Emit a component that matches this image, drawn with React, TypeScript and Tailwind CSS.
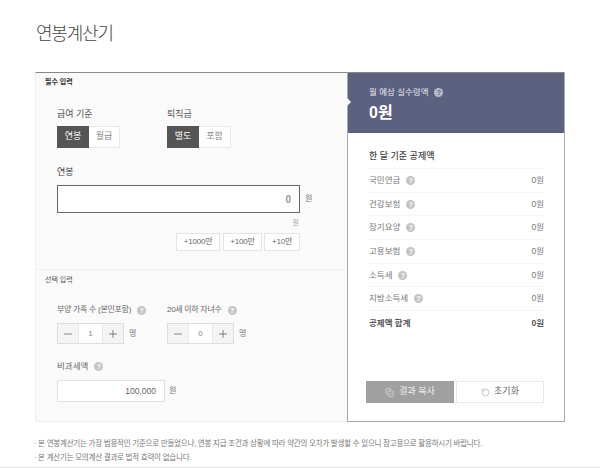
import { CopyCheck, Minus, Plus, RotateCcw } from "lucide-react";

const FONT = "font-['Liberation_Sans','Noto_Sans_CJK_KR',sans-serif]";

function Help({ dark }: { dark?: boolean }) {
  return (
    <span
      className={`ml-[6px] inline-flex h-[9px] w-[9px] shrink-0 items-center justify-center rounded-full text-[7px] font-bold leading-none ${
        dark ? "bg-[#b9bbc8] text-[#5d6180]" : "bg-[#c4c4c4] text-white"
      }`}
    >
      ?
    </span>
  );
}

function Toggle({ on, off, offWidth }: { on: string; off: string; offWidth: string }) {
  return (
    <div className="mt-[6px] flex h-[22px] w-fit text-[9px]">
      <div className="flex w-[32px] items-center justify-center bg-[#555555] text-white">{on}</div>
      <div className={`flex ${offWidth} items-center justify-center border border-l-0 border-[#e8e8e8] bg-white text-[#888888]`}>
        {off}
      </div>
    </div>
  );
}

function Stepper({ value }: { value: number }) {
  return (
    <div className="mt-[7px] flex items-center">
      <div className="flex h-[21px] border border-[#dddddd] bg-[#f4f4f4] text-[#555555]">
        <div className="flex w-[21px] items-center justify-center border-r border-[#e8e8e8]">
          <Minus size={12} strokeWidth={1.4} />
        </div>
        <div className="flex w-[23px] items-center justify-center bg-white text-[8px] text-[#888888]">{value}</div>
        <div className="flex w-[21px] items-center justify-center border-l border-[#e8e8e8]">
          <Plus size={12} strokeWidth={1.4} />
        </div>
      </div>
      <span className="ml-[5px] text-[8px] text-[#777777]">명</span>
    </div>
  );
}

const rows = ["국민연금", "건강보험", "장기요양", "고용보험", "소득세", "지방소득세"];

export default function App() {
  return (
    <div className={`${FONT} flex h-[468px] w-[600px] flex-col overflow-hidden bg-white text-[#666666]`}>
      <div className="px-[35px]">
        <h1 className="flex h-[72px] items-start pl-px pt-[21px] text-[18px] font-light leading-[26px] tracking-[-1.2px] text-[#444444]">
          연봉계산기
        </h1>

        <div className="flex h-[350px] w-[530px]">
          {/* Input side */}
          <div className="w-[312px] border-l border-t border-b border-l-[#eeeeee] border-t-[#888888] border-b-[#eeeeee] bg-[#fafafa]">
            <div className="h-[197px] border-b border-[#f0f0f0] pl-[9px] pt-[4px]">
              <div className="text-[7px] font-bold leading-[10px] text-[#333333]">필수 입력</div>
              <div className="ml-[12px] mt-[21px] flex">
                <div className="w-[110px]">
                  <div className="text-[9px] leading-[12px] text-[#555555]">급여 기준</div>
                  <Toggle on="연봉" off="월급" offWidth="w-[31px]" />
                </div>
                <div>
                  <div className="text-[9px] leading-[12px] text-[#555555]">퇴직금</div>
                  <Toggle on="별도" off="포함" offWidth="w-[32px]" />
                </div>
              </div>
              <div className="ml-[12px] mt-[18px] text-[9px] leading-[12px] text-[#444444]">연봉</div>
              <div className="ml-[12px] mt-[7px] flex items-center">
                <div className="flex h-[28px] w-[243px] items-center justify-end border border-[#666666] bg-white pr-[8px] text-[10px] font-bold text-[#999999]">
                  0
                </div>
                <span className="ml-[5px] text-[8px] text-[#777777]">원</span>
              </div>
              <div className="ml-[12px] mt-[5px] w-[243px] pr-px text-right text-[7px] leading-[9px] text-[#aaaaaa]">
                원
              </div>
              <div className="ml-[12px] mt-[6px] flex w-[243px] justify-end text-[8px] tracking-[-0.2px] text-[#666666]">
                <div className="flex h-[18px] w-[44px] items-center justify-center border border-[#e4e4e4] bg-white">+1000만</div>
                <div className="ml-[3px] flex h-[18px] w-[39px] items-center justify-center border border-[#e4e4e4] bg-white">+100만</div>
                <div className="ml-[2px] flex h-[18px] w-[36px] items-center justify-center border border-[#e4e4e4] bg-white">+10만</div>
              </div>
            </div>

            <div className="pl-[9px] pt-[5px]">
              <div className="text-[7px] leading-[10px] text-[#555555]">선택 입력</div>
              <div className="ml-[12px] mt-[19px] flex">
                <div className="w-[110px]">
                  <div className="flex h-[12px] items-center text-[8px] tracking-[-0.3px] text-[#666666]">
                    부양 가족 수 (본인포함)
                    <Help />
                  </div>
                  <Stepper value={1} />
                </div>
                <div>
                  <div className="flex h-[12px] items-center text-[8px] tracking-[-0.3px] text-[#666666]">
                    20세 이하 자녀수
                    <Help />
                  </div>
                  <Stepper value={0} />
                </div>
              </div>
              <div className="ml-[12px] mt-[16px] flex h-[12px] items-center text-[8.5px] text-[#666666]">
                비과세액
                <Help />
              </div>
              <div className="ml-[12px] mt-[8px] flex items-center">
                <div className="flex h-[22px] w-[108px] items-center justify-end border border-[#e0e0e0] bg-white pr-[8px] text-[8.5px] text-[#666666]">
                  100,000
                </div>
                <span className="ml-[4px] text-[8px] text-[#777777]">원</span>
              </div>
            </div>
          </div>

          {/* Result side */}
          <div className="relative flex w-[218px] flex-col border-x border-b border-[#a8a8ae] border-t-0 bg-white">
            <span className="absolute -left-px top-[26px] h-0 w-0 border-y-[4px] border-l-[4px] border-y-transparent border-l-white" />
            <div className="h-[61px] border-t border-[#888888] bg-[#5d6180] pl-[21px] pt-[13px] text-white">
              <div className="flex h-[12px] items-center text-[8.5px] text-[#e4e5ec]">
                월 예상 실수령액
                <Help dark />
              </div>
              <div className="mt-[4px] text-[16px] font-bold leading-[22px]">0원</div>
            </div>
            <div className="pl-[21px] pr-[20px] pt-[17px]">
              <div className="text-[9px] font-medium leading-[12px] text-[#444444]">한 달 기준 공제액</div>
              <div className="mt-[6px] border-t border-[#f4f4f4]">
                {rows.map((name) => (
                  <div key={name} className="flex h-[23.7px] items-center justify-between border-b border-[#f4f4f4] text-[8.5px] text-[#777777]">
                    <span className="flex items-center">
                      {name}
                      <Help />
                    </span>
                    <span>0원</span>
                  </div>
                ))}
                <div className="flex h-[23.7px] items-center justify-between text-[8.5px] font-bold text-[#555555]">
                  <span>공제액 합계</span>
                  <span>0원</span>
                </div>
              </div>
            </div>
            <div className="mt-auto flex gap-[2px] px-[18px] pb-[18px] text-[9px]">
              <div className="flex h-[22px] w-[88px] items-center justify-center gap-[5px] bg-[#a0a0a0] text-[#f0f0f0]">
                <CopyCheck size={9} strokeWidth={1.5} />
                결과 복사
              </div>
              <div className="flex h-[22px] w-[88px] items-center justify-center gap-[4px] border border-[#e8e8e8] bg-white text-[#666666]">
                <RotateCcw size={9} strokeWidth={1.5} className="text-[#999999]" />
                초기화
              </div>
            </div>
          </div>
        </div>

        <div className="-ml-px mt-[15px] text-[7.5px] leading-[14px] tracking-[-0.23px] text-[#777777]">
          <p>· 본 연봉계산기는 가장 범용적인 기준으로 만들었으나, 연봉 지급 조건과 상황에 따라 약간의 오차가 발생할 수 있으니 참고용으로 활용하시기 바랍니다.</p>
          <p>· 본 계산기는 모의계산 결과로 법적 효력이 없습니다.</p>
        </div>
      </div>
      <div className="mt-auto h-[1.5px] w-full bg-[#e2e2e2]" />
    </div>
  );
}
